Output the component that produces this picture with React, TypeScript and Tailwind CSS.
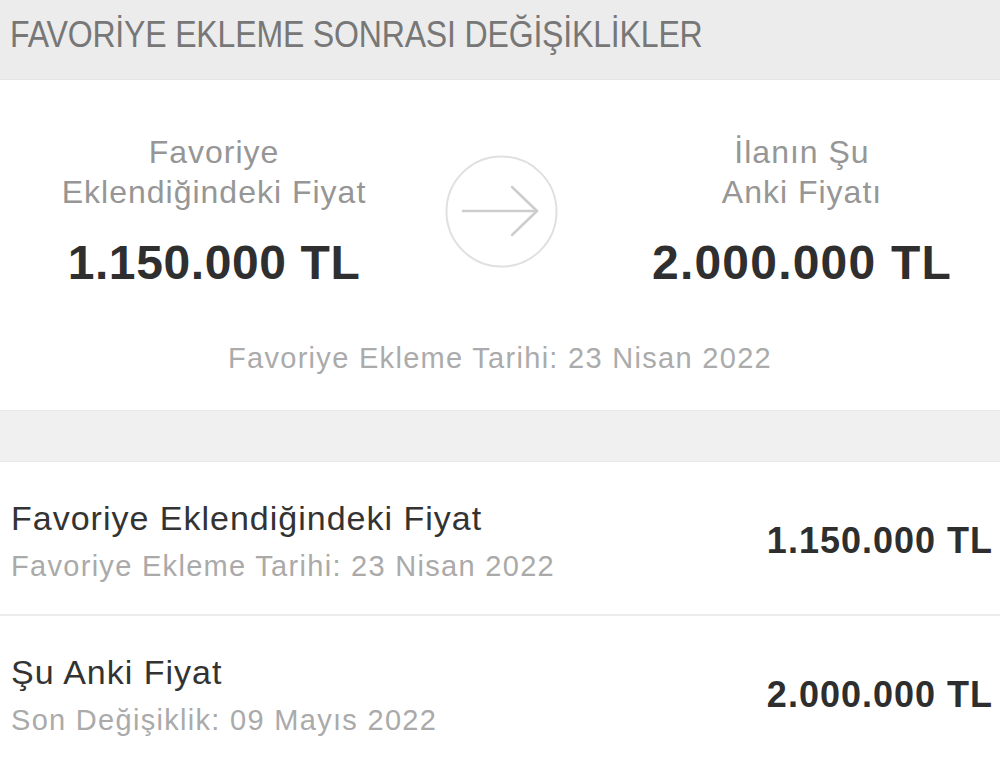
import React from 'react';

const font = { fontFamily: '"Liberation Sans", Arial, sans-serif' };

function ArrowCircle() {
  return (
    <svg width="113" height="113" viewBox="0 0 113 113" fill="none">
      <circle cx="56.5" cy="56.5" r="55" stroke="#e0e0e0" strokeWidth="2" />
      <path d="M18 56 H92" stroke="#cdcdcd" strokeWidth="2.5" strokeLinecap="round" />
      <path d="M67 32 L92 56 L67 80" stroke="#cdcdcd" strokeWidth="2.5" strokeLinecap="round" strokeLinejoin="round" />
    </svg>
  );
}

function PriceRow({ title, sub, price }: { title: string; sub: string; price: string }) {
  return (
    <div className="flex items-center justify-between bg-white pl-[11px] pr-[7px] pt-[36px] pb-[30px]">
      <div>
        <div className="text-[34px] leading-[40px] tracking-[1px] text-[#333]">{title}</div>
        <div className="mt-[10px] text-[29px] leading-[36px] tracking-[1.3px] text-[#aaaaaa]">{sub}</div>
      </div>
      <div className="text-[36px] leading-[40px] font-bold tracking-[1px] text-[#2e2e2e]">{price}</div>
    </div>
  );
}

export default function App() {
  return (
    <div className="w-[1000px] h-[760px] overflow-hidden bg-white" style={font}>
      {/* header */}
      <div className="h-[80px] bg-[#ececec] pl-[10px] pt-[14px] border-b border-[#e4e4e4]">
        <div className="origin-left scale-x-[0.89] whitespace-nowrap text-[36px] leading-[42px] tracking-[-0.2px] text-[#777777]">
          FAVORİYE EKLEME SONRASI DEĞİŞİKLİKLER
        </div>
      </div>

      {/* summary card */}
      <div className="h-[330px] bg-white pt-[52px]">
        <div className="flex items-center pl-[34px]">
          <div className="w-[360px] text-center">
            <div className="text-[32px] leading-[40px] tracking-[1px] text-[#969696]">
              Favoriye
              <br />
              Eklendiğindeki Fiyat
            </div>
            <div className="mt-[23px] text-[48px] leading-[56px] font-bold tracking-[0.6px] text-[#2f2f2f]">
              1.150.000 TL
            </div>
          </div>
          <div className="ml-[51px] w-[113px] h-[113px]">
            <ArrowCircle />
          </div>
          <div className="ml-[64px] w-[360px] text-center">
            <div className="text-[32px] leading-[40px] tracking-[1px] text-[#969696]">
              İlanın Şu
              <br />
              Anki Fiyatı
            </div>
            <div className="mt-[23px] text-[48px] leading-[56px] font-bold tracking-[1.2px] text-[#2f2f2f]">
              2.000.000 TL
            </div>
          </div>
        </div>
        <div className="mt-[49px] text-center text-[29px] leading-[36px] tracking-[1.3px] text-[#ababab]">
          Favoriye Ekleme Tarihi: 23 Nisan 2022
        </div>
      </div>

      {/* spacer strip */}
      <div className="h-[52px] bg-[#f0f0f0] border-y border-[#e8e8e8]" />

      <PriceRow
        title="Favoriye Eklendiğindeki Fiyat"
        sub="Favoriye Ekleme Tarihi: 23 Nisan 2022"
        price="1.150.000 TL"
      />
      <div className="h-[2px] bg-[#ececec]" />
      <PriceRow
        title="Şu Anki Fiyat"
        sub="Son Değişiklik: 09 Mayıs 2022"
        price="2.000.000 TL"
      />
    </div>
  );
}
